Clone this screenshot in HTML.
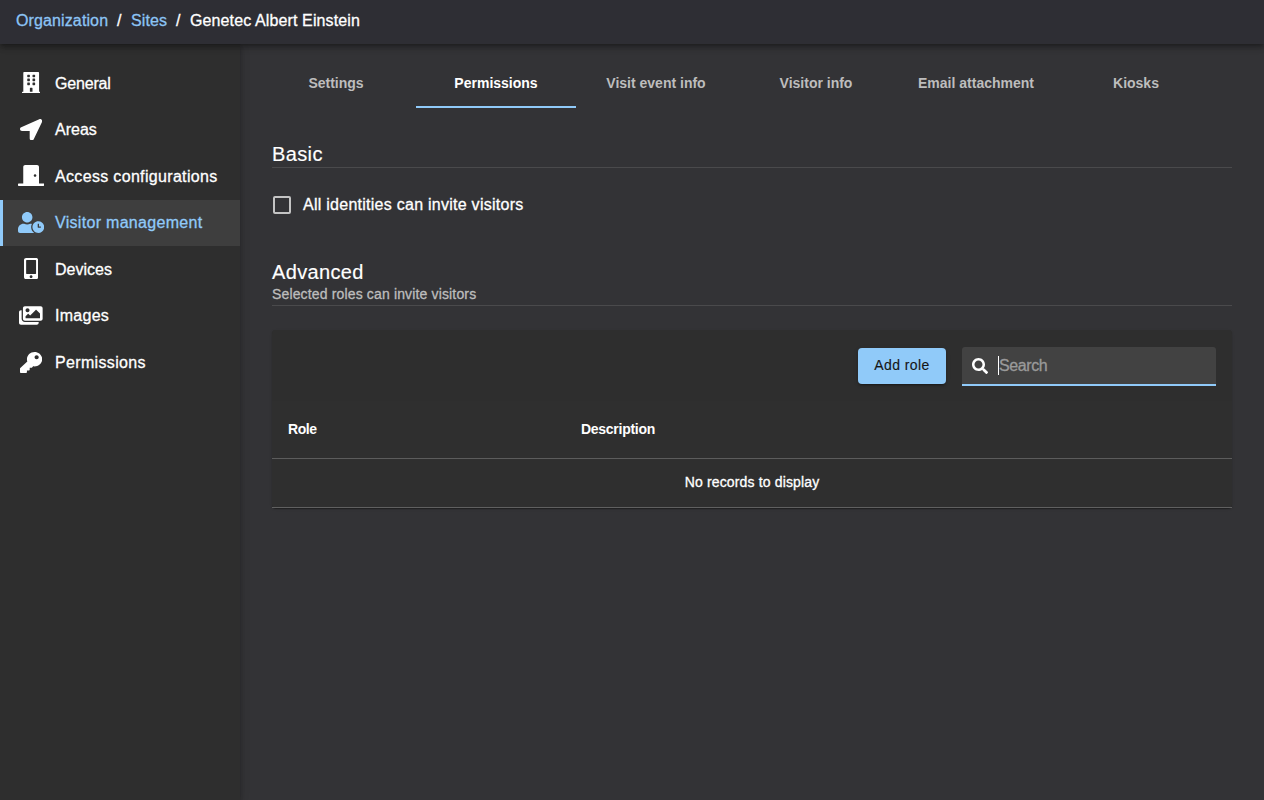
<!DOCTYPE html>
<html lang="en">
<head>
<meta charset="utf-8">
<title>Genetec Albert Einstein - Visitor management</title>
<style>
*{box-sizing:border-box;margin:0;padding:0}
html,body{width:1264px;height:800px;overflow:hidden;background:#333336;font-family:"Liberation Sans",sans-serif;color:#fff;-webkit-text-stroke:.3px}
#hdr{position:absolute;left:0;top:0;width:1264px;height:44px;background:#2e2e34;box-shadow:0 2px 4px -1px rgba(0,0,0,.25),0 4px 5px 0 rgba(0,0,0,.17),0 1px 10px 0 rgba(0,0,0,.14);z-index:5;font-size:16px;letter-spacing:.12px}
#hdr span{position:absolute;top:0;line-height:42px;white-space:nowrap}
#hdr .lk{color:#8cc4f5}
#side{position:absolute;left:0;top:44px;width:240px;height:756px;background:#2e2e2e;box-shadow:0 2px 4px -1px rgba(0,0,0,.2),0 4px 5px 0 rgba(0,0,0,.14),0 1px 10px 0 rgba(0,0,0,.12);z-index:3}
.nav{position:absolute;left:0;width:240px;height:46px;font-size:16px}
.nav span{position:absolute;left:55px;top:1px;line-height:46px;white-space:nowrap}
.nav svg{position:absolute;fill:#fff}
.nav.act{background:#3e3e3e;border-left:3px solid #90caf9;color:#90caf9}
.nav.act svg{fill:#90caf9}
#main{position:absolute;left:240px;top:44px;width:1024px;height:756px;background:#333336}
.tab{position:absolute;top:60px;height:46px;width:160px;text-align:center;font-size:14px;font-weight:bold;color:#bdbdbd;line-height:46px;white-space:nowrap}
.tab,.th{-webkit-text-stroke:0}
.tab.act{color:#fff;border-bottom:2px solid #90caf9;height:48px}
.h{position:absolute;left:272px;font-size:20px;white-space:nowrap;color:#fff;-webkit-text-stroke:.15px}
.ln{position:absolute;left:272px;width:960px;height:1px;background:#4a4a4c}
#cb{position:absolute;left:273px;top:196px;width:18px;height:18px;border:2px solid #c4c4c4;border-radius:2px}
#cbl{position:absolute;left:303px;top:195px;font-size:16px;line-height:20px;white-space:nowrap;letter-spacing:.26px}
#sub{position:absolute;left:272px;top:285px;font-size:14px;line-height:18px;color:#bdbdbd;white-space:nowrap;letter-spacing:.15px}
#panel{position:absolute;left:272px;top:330px;width:960px;height:178px;background:#2f2f2f;border-radius:4px;box-shadow:0 2px 1px -1px rgba(0,0,0,.2),0 1px 1px 0 rgba(0,0,0,.14),0 1px 3px 0 rgba(0,0,0,.12)}
#tb{position:absolute;left:0;top:0;width:960px;height:71px;background:#2e2e2e;border-radius:4px 4px 0 0}
#btn{position:absolute;left:858px;top:348px;width:88px;height:36px;background:#90caf9;border-radius:4px;color:#161616;font-size:14px;text-align:center;line-height:35px;letter-spacing:.4px;-webkit-text-stroke:.12px;box-shadow:0 3px 1px -2px rgba(0,0,0,.2),0 2px 2px 0 rgba(0,0,0,.14),0 1px 5px 0 rgba(0,0,0,.12)}
#srch{position:absolute;left:962px;top:347px;width:254px;height:39px;background:#424242;border-radius:3px 3px 0 0;border-bottom:2px solid #90caf9}
#srch svg{position:absolute;left:10px;top:11px;fill:#fff}
#srch i{position:absolute;left:36px;top:9px;width:1px;height:19px;background:#fff}
#srch span{position:absolute;left:37px;top:1px;line-height:36px;font-size:16px;color:#9a9a9a;letter-spacing:-.4px}
.th{position:absolute;top:420px;font-size:14px;font-weight:bold;line-height:18px;white-space:nowrap}
#nr{position:absolute;left:272px;width:960px;top:473px;text-align:center;font-size:14px;line-height:18px;letter-spacing:.15px}
</style>
</head>
<body>
<div id="main"></div>
<div id="side">
  <div class="nav" style="top:16px"><svg style="left:21.8px;top:12px" width="18.375" height="21" viewBox="0 0 448 512"><path d="M436 480h-20V24c0-13.255-10.745-24-24-24H56C42.745 0 32 10.745 32 24v456H12c-6.627 0-12 5.373-12 12v20h448v-20c0-6.627-5.373-12-12-12zM128 76c0-6.627 5.373-12 12-12h40c6.627 0 12 5.373 12 12v40c0 6.627-5.373 12-12 12h-40c-6.627 0-12-5.373-12-12V76zm0 96c0-6.627 5.373-12 12-12h40c6.627 0 12 5.373 12 12v40c0 6.627-5.373 12-12 12h-40c-6.627 0-12-5.373-12-12v-40zm52 148h-40c-6.627 0-12-5.373-12-12v-40c0-6.627 5.373-12 12-12h40c6.627 0 12 5.373 12 12v40c0 6.627-5.373 12-12 12zm76 160h-64v-84c0-6.627 5.373-12 12-12h40c6.627 0 12 5.373 12 12v84zm64-172c0 6.627-5.373 12-12 12h-40c-6.627 0-12-5.373-12-12v-40c0-6.627 5.373-12 12-12h40c6.627 0 12 5.373 12 12v40zm0-96c0 6.627-5.373 12-12 12h-40c-6.627 0-12-5.373-12-12v-40c0-6.627 5.373-12 12-12h40c6.627 0 12 5.373 12 12v40zm0-96c0 6.627-5.373 12-12 12h-40c-6.627 0-12-5.373-12-12V76c0-6.627 5.373-12 12-12h40c6.627 0 12 5.373 12 12v40z"/></svg><span style="letter-spacing:-.17px">General</span></div>
  <div class="nav" style="top:63px"><svg style="left:19.9px;top:11.8px" width="22.2" height="21.4" preserveAspectRatio="none" viewBox="0 0 512 512"><path d="M444.52 3.52L28.74 195.42c-47.97 22.39-31.98 92.75 19.19 92.75h175.91v175.91c0 51.17 70.36 67.17 92.75 19.19l191.9-415.78c15.99-38.39-25.59-79.97-63.97-63.97z"/></svg><span style="top:0">Areas</span></div>
  <div class="nav" style="top:109px"><svg style="left:17.9px;top:12px" width="26.25" height="21" viewBox="0 0 640 512"><path d="M624 448H512V50.8C512 22.78 490.47 0 464 0H175.99c-26.47 0-48 22.78-48 50.8V448H16c-8.84 0-16 7.16-16 16v32c0 8.84 7.16 16 16 16h608c8.840 0 16-7.160 16-16v-32c0-8.840-7.160-16-16-16zM415.990 288c-17.670 0-32-14.330-32-32s14.330-32 32-32 32 14.330 32 32c.010 17.670-14.320 32-32 32z"/></svg><span style="letter-spacing:.33px">Access configurations</span></div>
  <div class="nav act" style="top:156px"><svg style="left:14.9px;top:12px" width="26.25" height="21" viewBox="0 0 640 512"><path d="M496 224c-79.600 0-144 64.400-144 144s64.400 144 144 144 144-64.400 144-144-64.400-144-144-144zm64 150.300c0 5.300-4.400 9.700-9.700 9.700h-60.600c-5.300 0-9.700-4.400-9.700-9.700v-76.600c0-5.300 4.400-9.700 9.700-9.700h12.600c5.300 0 9.700 4.400 9.700 9.700V352h38.300c5.300 0 9.700 4.400 9.700 9.700v12.600zM320 368c0-27.800 6.700-54.100 18.200-77.500-8-1.500-16.200-2.500-24.600-2.500h-16.700c-22.200 10.200-46.900 16-72.900 16s-50.600-5.800-72.900-16h-16.700C60.200 288 0 348.200 0 422.400V464c0 26.500 21.500 48 48 48h347.100c-45.300-31.900-75.100-84.500-75.100-144zm-96-112c70.700 0 128-57.300 128-128S294.700 0 224 0 96 57.300 96 128s57.300 128 128 128z"/></svg><span style="left:52px;top:0;letter-spacing:.3px">Visitor management</span></div>
  <div class="nav" style="top:202px"><svg style="left:23.9px;top:11.9px" width="14.2" height="21.3" preserveAspectRatio="none" viewBox="0 0 320 512"><path d="M272 0H48C21.500 0 0 21.500 0 48v416c0 26.500 21.500 48 48 48h224c26.500 0 48-21.500 48-48V48c0-26.500-21.500-48-48-48zM160 480c-17.700 0-32-14.300-32-32s14.300-32 32-32 32 14.300 32 32-14.300 32-32 32zm112-108c0 6.600-5.400 12-12 12H60c-6.600 0-12-5.400-12-12V60c0-6.600 5.400-12 12-12h200c6.600 0 12 5.400 12 12v312z"/></svg><span>Devices</span></div>
  <div class="nav" style="top:249px"><svg style="left:19.2px;top:12px" width="23.625" height="21" viewBox="0 0 576 512"><path d="M480 416v16c0 26.510-21.490 48-48 48H48c-26.510 0-48-21.490-48-48V176c0-26.510 21.490-48 48-48h16v208c0 44.112 35.888 80 80 80h336zm96-80V80c0-26.510-21.490-48-48-48H144c-26.510 0-48 21.490-48 48v256c0 26.510 21.490 48 48 48h384c26.510 0 48-21.490 48-48zM256 128c0 26.510-21.490 48-48 48s-48-21.490-48-48 21.490-48 48-48 48 21.490 48 48zm-96 144l55.515-55.515c4.686-4.686 12.284-4.686 16.971 0L272 256l135.515-135.515c4.686-4.686 12.284-4.686 16.971 0L512 208v112H160v-48z"/></svg><span style="top:0;letter-spacing:.27px">Images</span></div>
  <div class="nav" style="top:295px"><svg style="left:19.9px;top:13px" width="22.2" height="21" preserveAspectRatio="none" viewBox="0 0 512 512"><path d="M512 176.001C512 273.203 433.202 352 336 352c-11.220 0-22.190-1.062-32.827-3.069l-24.012 27.014A23.999 23.999 0 0 1 261.223 384H224v40c0 13.255-10.745 24-24 24h-40v40c0 13.255-10.745 24-24 24H24c-13.255 0-24-10.745-24-24v-78.059c0-6.365 2.529-12.470 7.029-16.971l161.802-161.802C163.108 213.814 160 195.271 160 176 160 78.798 238.797.001 335.999 0 433.488-.001 512 78.511 512 176.001zM336 128c0 26.510 21.490 48 48 48s48-21.490 48-48-21.490-48-48-48-48 21.490-48 48z"/></svg><span style="letter-spacing:.34px">Permissions</span></div>
</div>
<div id="hdr">
  <span class="lk" style="left:16px">Organization</span><span style="left:117px">/</span><span class="lk" style="left:131px">Sites</span><span style="left:176px">/</span><span style="left:190px">Genetec Albert Einstein</span>
</div>

<div class="tab" style="left:256px">Settings</div>
<div class="tab act" style="left:416px">Permissions</div>
<div class="tab" style="left:576px">Visit event info</div>
<div class="tab" style="left:736px">Visitor info</div>
<div class="tab" style="left:896px">Email attachment</div>
<div class="tab" style="left:1056px">Kiosks</div>

<div class="h" style="top:142px;line-height:24px;letter-spacing:.38px">Basic</div>
<div class="ln" style="top:167px"></div>
<div id="cb"></div>
<div id="cbl">All identities can invite visitors</div>

<div class="h" style="top:260px;line-height:24px;letter-spacing:.35px">Advanced</div>
<div id="sub">Selected roles can invite visitors</div>
<div class="ln" style="top:305px"></div>

<div id="panel"><div id="tb"></div></div>
<div id="btn">Add role</div>
<div id="srch"><svg width="16" height="16" viewBox="0 0 512 512"><path d="M505 442.700L405.300 343c-4.500-4.500-10.600-7-17-7H372c27.600-35.300 44-79.700 44-128C416 93.100 322.900 0 208 0S0 93.100 0 208s93.100 208 208 208c48.300 0 92.700-16.400 128-44v16.300c0 6.400 2.500 12.500 7 17l99.700 99.700c9.400 9.400 24.600 9.400 33.900 0l28.300-28.300c9.400-9.400 9.400-24.600.1-34zM208 336c-70.700 0-128-57.200-128-128 0-70.700 57.200-128 128-128 70.700 0 128 57.200 128 128 0 70.700-57.200 128-128 128z"/></svg><i></i><span>Search</span></div>
<div class="th" style="left:288px;letter-spacing:-.45px">Role</div>
<div class="th" style="left:581px;letter-spacing:-.28px">Description</div>
<div class="ln" style="top:458px;background:#5c5c5c"></div>
<div id="nr">No records to display</div>
<div class="ln" style="top:507px;background:#606060"></div>
</body>
</html>
